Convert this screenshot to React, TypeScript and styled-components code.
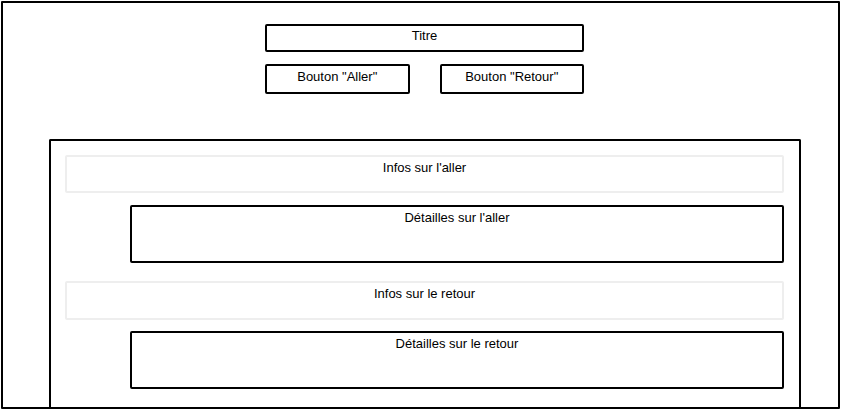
import React from "react";
import styled, { createGlobalStyle } from "styled-components";

const Global = createGlobalStyle`
  html, body { margin: 0; padding: 0; background: #fff; }
  body { font-family: "Liberation Sans", Arial, sans-serif; font-size: 13px; color: #000; }
  * { box-sizing: border-box; }
`;

const Frame = styled.div`
  margin: 1px 0 0 1px;
  width: 839px;
  height: 408px;
  border: 2px solid #000;
  border-radius: 1px;
  display: flex;
  flex-direction: column;
  padding: 21px 36px 0 46px;
`;

const Header = styled.div`
  align-self: flex-start;
  margin-left: 216px;
  width: 319px;
  display: flex;
  flex-direction: column;
  gap: 12px;
`;

const Box = styled.div<{ $h: number; $pt: number }>`
  height: ${(p) => p.$h}px;
  border: 2px solid #000;
  border-radius: 2px;
  padding-top: ${(p) => p.$pt}px;
  text-align: center;
  line-height: 15px;
  white-space: nowrap;
`;

const ButtonRow = styled.div`
  display: flex;
  gap: 30px;
`;

const Button = styled(Box)`
  width: 145px;
`;

const Panel = styled.div`
  margin-top: 45px;
  width: 752px;
  flex: 1;
  border: 2px solid #000;
  border-bottom: none;
  border-radius: 2px 2px 0 0;
  padding: 14px 15px 0 14px;
  display: flex;
  flex-direction: column;
`;

const InfoBar = styled.div<{ $mt: number; $h: number }>`
  margin-top: ${(p) => p.$mt}px;
  height: ${(p) => p.$h}px;
  border: 2px solid #eeeeee;
  border-radius: 2px;
  padding-top: 3px;
  text-align: center;
  line-height: 15px;
`;

const Details = styled.div<{ $mt: number }>`
  margin-top: ${(p) => p.$mt}px;
  margin-left: 65px;
  height: 58px;
  border: 2px solid #000;
  border-radius: 2px;
  padding-top: 3px;
  text-align: center;
  line-height: 15px;
`;

export default function App() {
  return (
    <>
      <Global />
      <Frame>
        <Header>
          <Box $h={28} $pt={2}>Titre</Box>
          <ButtonRow>
            <Button $h={30} $pt={3}>Bouton "Aller"</Button>
            <Button $h={30} $pt={3}>Bouton "Retour"</Button>
          </ButtonRow>
        </Header>
        <Panel>
          <InfoBar $mt={0} $h={38}>Infos sur l'aller</InfoBar>
          <Details $mt={12}>Détailles sur l'aller</Details>
          <InfoBar $mt={18} $h={39}>Infos sur le retour</InfoBar>
          <Details $mt={11}>Détailles sur le retour</Details>
        </Panel>
      </Frame>
    </>
  );
}
